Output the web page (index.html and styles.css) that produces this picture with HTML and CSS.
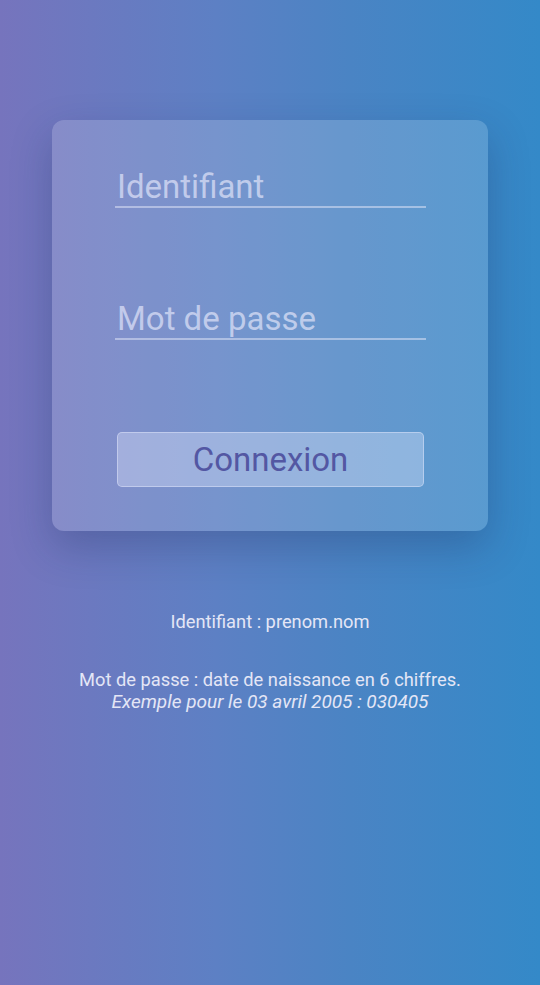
FILE: index.html
```html
<!DOCTYPE html>
<html lang="fr">
<head>
<meta charset="utf-8">
<title>Connexion</title>
<link rel="stylesheet" href="styles.css">
</head>
<body>
<main class="page">
  <form class="card">
    <div class="field"><input class="input" type="text" placeholder="Identifiant"></div>
    <div class="field field-pass"><input class="input" type="password" placeholder="Mot de passe"></div>
    <button class="btn" type="button">Connexion</button>
  </form>
  <div class="help">
    <p class="help-id">Identifiant : prenom.nom</p>
    <p class="help-pass">Mot de passe : date de naissance en 6 chiffres.<br><em>Exemple pour le 03 avril 2005 : 030405</em></p>
  </div>
</main>
</body>
</html>
```

FILE: styles.css
```css
* { box-sizing: border-box; }
html, body { margin: 0; height: 100%; }
body {
  background: linear-gradient(90deg, #7674bd 0%, #5d80c4 40%, #4a84c4 65%, #3489c8 100%);
  font-family: Roboto, "Noto Sans", sans-serif;
}
.page {
  min-height: 985px;
  padding-top: 120px;
  display: flex;
  flex-direction: column;
  align-items: center;
}
.card {
  width: 436px;
  height: 411px;
  border-radius: 12px;
  background: rgba(255,255,255,0.16);
  box-shadow: 0 16px 40px rgba(30,40,90,0.28);
  padding: 47px 62px 0 63px;
  display: flex;
  flex-direction: column;
}
.field {
  border-bottom: 2px solid rgba(220,225,245,0.55);
  height: 41px;
}
.field-pass { margin-top: 91px; }
.input {
  width: 100%;
  border: 0;
  outline: 0;
  background: transparent;
  font-family: Roboto, sans-serif;
  font-size: 33px;
  padding: 0 0 0 2px;
  height: 38px;
  color: #e6e8f8;
}
.input::placeholder { color: rgba(222,226,248,0.72); }
.btn {
  margin-top: 92px;
  margin-left: 2px;
  width: 307px;
  height: 55px;
  border-radius: 5px;
  border: 1px solid rgba(230,235,255,0.45);
  background: rgba(230,235,255,0.35);
  color: #5357a3;
  font-family: Roboto, sans-serif;
  font-size: 33px;
  padding: 0;
}
.help {
  margin-top: 80px;
  text-align: center;
  color: #e4e6f6;
  font-size: 18.3px;
  line-height: 22px;
}
.help .help-id { margin: 0; }
.help .help-pass { margin: 36px 0 0; }
.help em { font-style: italic; font-size: 19px; }
```
